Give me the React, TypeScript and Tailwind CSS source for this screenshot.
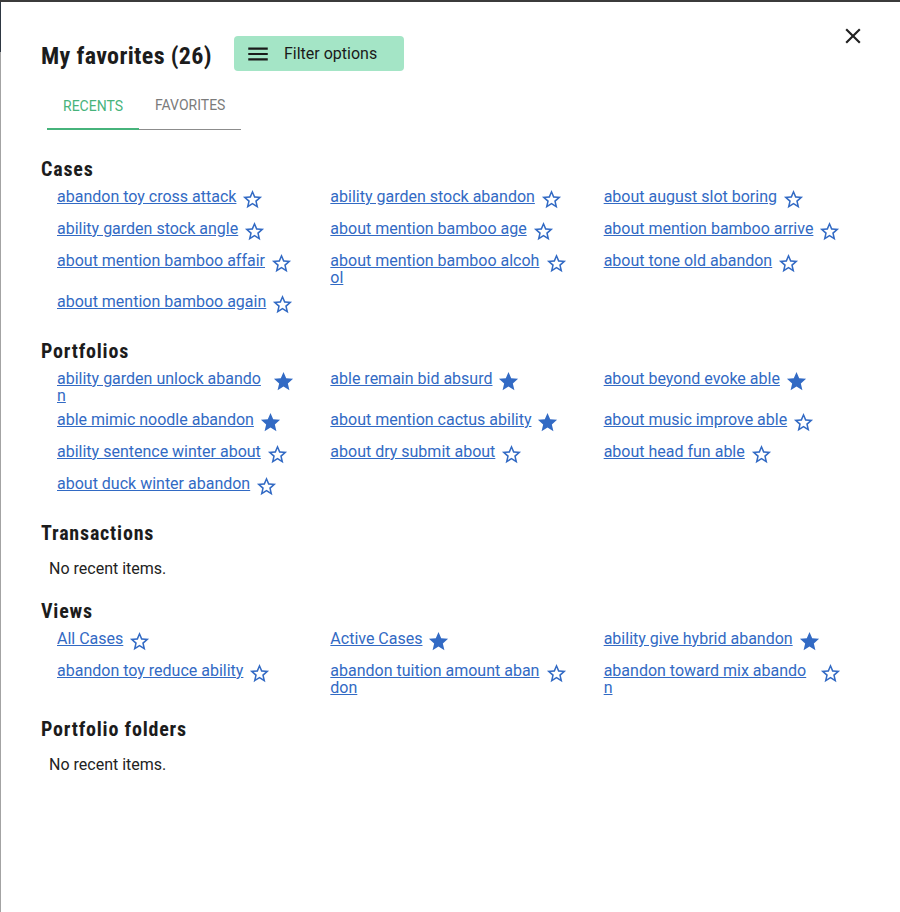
import React, { useState } from 'react';

interface IFavorite {
  label: string;
  starred: boolean;
}

interface ISection {
  title: string;
  items: IFavorite[];
}

const STAR =
  'M12 17.27L18.18 21l-1.64-7.03L22 9.24l-7.19-.61L12 2 9.19 8.63 2 9.24l5.46 4.73L5.82 21z';
const STAR_BORDER =
  'M22 9.24l-7.19-.62L12 2 9.19 8.63 2 9.24l5.46 4.73L5.82 21 12 17.27 18.18 21l-1.63-7.03L22 9.24zM12 15.4l-3.76 2.27 1-4.28-3.32-2.88 4.38-.38L12 6.1l1.71 4.04 4.38.38-3.32 2.88 1 4.28L12 15.4z';

const sections: ISection[] = [
  {
    title: 'Cases',
    items: [
      { label: 'abandon toy cross attack', starred: false },
      { label: 'ability garden stock abandon', starred: false },
      { label: 'about august slot boring', starred: false },
      { label: 'ability garden stock angle', starred: false },
      { label: 'about mention bamboo age', starred: false },
      { label: 'about mention bamboo arrive', starred: false },
      { label: 'about mention bamboo affair', starred: false },
      { label: 'about mention bamboo alcohol', starred: false },
      { label: 'about tone old abandon', starred: false },
      { label: 'about mention bamboo again', starred: false },
    ],
  },
  {
    title: 'Portfolios',
    items: [
      { label: 'ability garden unlock abandon', starred: true },
      { label: 'able remain bid absurd', starred: true },
      { label: 'about beyond evoke able', starred: true },
      { label: 'able mimic noodle abandon', starred: true },
      { label: 'about mention cactus ability', starred: true },
      { label: 'about music improve able', starred: false },
      { label: 'ability sentence winter about', starred: false },
      { label: 'about dry submit about', starred: false },
      { label: 'about head fun able', starred: false },
      { label: 'about duck winter abandon', starred: false },
    ],
  },
  { title: 'Transactions', items: [] },
  {
    title: 'Views',
    items: [
      { label: 'All Cases', starred: false },
      { label: 'Active Cases', starred: true },
      { label: 'ability give hybrid abandon', starred: true },
      { label: 'abandon toy reduce ability', starred: false },
      { label: 'abandon tuition amount abandon', starred: false },
      { label: 'abandon toward mix abandon', starred: false },
    ],
  },
  { title: 'Portfolio folders', items: [] },
];

const StarIcon = ({ filled }: { filled: boolean }) => (
  <svg
    viewBox="0 0 24 24"
    width={23}
    height={23}
    className="mt-[1px] ml-[5px] shrink-0 fill-[#326ac4] cursor-pointer"
  >
    <path d={filled ? STAR : STAR_BORDER} />
  </svg>
);

const FavoriteItem = ({ label, starred }: IFavorite) => (
  <div className="flex items-start">
    <a
      href="#"
      className="block max-w-[210px] pt-[1px] -mb-[2px] break-all text-[16px] leading-[17px] text-[#326ac4] underline"
    >
      {label}
    </a>
    <StarIcon filled={starred} />
  </div>
);

const Section = ({ title, items }: ISection) => (
  <div className={items.length ? 'pb-[23px]' : 'pb-[18px]'}>
    <h2 className="font-['Roboto_Condensed','Roboto',sans-serif] [font-stretch:condensed] tracking-[0.8px] font-bold text-[20px] leading-6 text-[#1c1c1c]">
      {title}
    </h2>
    {items.length ? (
      <div className="grid grid-cols-3 gap-y-[8px] pl-4 mt-[6px]">
        {items.map((item) => (
          <FavoriteItem key={item.label} {...item} />
        ))}
      </div>
    ) : (
      <p className="pl-2 pt-3 text-[16px] leading-6 text-[#222]">No recent items.</p>
    )}
  </div>
);

const App = () => {
  const [tab, setTab] = useState<'recents' | 'favorites'>('recents');

  return (
    <div className="min-h-screen bg-white border-t-2 border-[#3b3b3b] font-['Roboto',sans-serif] flex">
      <div className="w-px shrink-0 bg-[#a3a3a3] flex flex-col">
        <div className="h-[50px] bg-[#2e3742]" />
      </div>
      <div className="relative flex-1 pl-[40px] pr-[23px]">
        <button className="absolute top-[21px] right-[34px] text-[#222]">
          <svg viewBox="0 0 24 24" width={26} height={26} className="fill-current">
            <path d="M19 6.41L17.59 5 12 10.59 6.41 5 5 6.41 10.59 12 5 17.59 6.41 19 12 13.41 17.59 19 19 17.59 13.41 12z" />
          </svg>
        </button>

        <div className="flex items-center pt-[34px]">
          <h1 className="mt-[4px] font-['Roboto_Condensed','Roboto',sans-serif] [font-stretch:condensed] tracking-[0.35px] font-bold text-[24px] leading-[28px] text-[#1c1c1c]">
            My favorites (26)
          </h1>
          <button className="ml-[22px] flex items-center h-[35px] w-[170px] rounded bg-[#a4e5c6] pl-[11px] text-[16px] text-[#1a1a1a]">
            <svg viewBox="0 0 24 24" width={26} height={26} className="fill-current">
              <path d="M3 18h18v-2H3v2zm0-5h18v-2H3v2zm0-7v2h18V6H3z" />
            </svg>
            <span className="ml-[13px]">Filter options</span>
          </button>
        </div>

        <div className="mt-[12px] ml-[6px] flex w-fit border-b border-[#8c8c8c]">
          <button
            onClick={() => setTab('recents')}
            className={`h-[47px] -mb-px px-4 pt-[2px] border-b-2 text-[14px] uppercase ${
              tab === 'recents' ? 'border-[#46b37b] text-[#46b37b]' : 'border-transparent text-[#7b7b7b]'
            }`}
          >
            Recents
          </button>
          <button
            onClick={() => setTab('favorites')}
            className={`h-[47px] -mb-px px-4 border-b-2 text-[14px] uppercase ${
              tab === 'favorites' ? 'border-[#46b37b] text-[#46b37b]' : 'border-transparent text-[#7b7b7b]'
            }`}
          >
            Favorites
          </button>
        </div>

        <div className="mt-[27px]">
          {sections.map((section) => (
            <Section key={section.title} {...section} />
          ))}
        </div>
      </div>
    </div>
  );
};

export default App;
